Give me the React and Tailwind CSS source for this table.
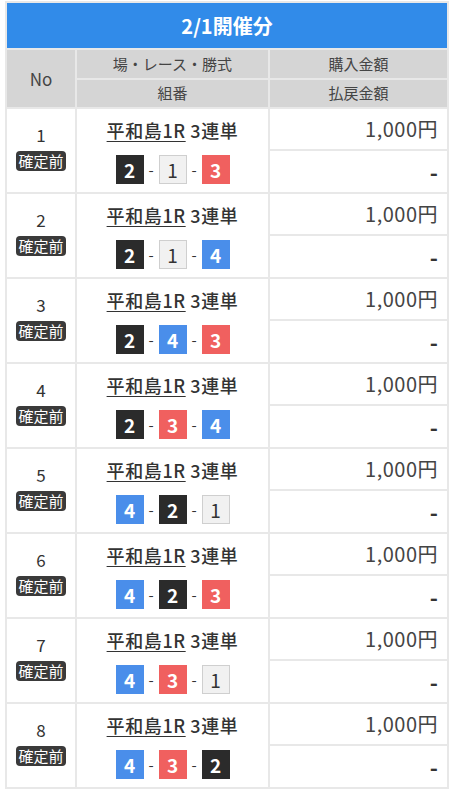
import React from 'react';

const font = { fontFamily: '"Noto Sans CJK JP", "Noto Sans", sans-serif' };

const bets = [
  { no: 1, combo: [2, 1, 3] },
  { no: 2, combo: [2, 1, 4] },
  { no: 3, combo: [2, 4, 3] },
  { no: 4, combo: [2, 3, 4] },
  { no: 5, combo: [4, 2, 1] },
  { no: 6, combo: [4, 2, 3] },
  { no: 7, combo: [4, 3, 1] },
  { no: 8, combo: [4, 3, 2] },
];

const boatClass = {
  1: 'bg-[#f1f1f1] text-[#333] border border-[#cfcfcf] font-normal',
  2: 'bg-[#2b2b2b] text-white font-bold',
  3: 'bg-[#f0605f] text-white font-bold',
  4: 'bg-[#4a8eea] text-white font-bold',
};

const Boat = ({ n }) => (
  <span className={`w-[28px] h-[29px] flex items-center justify-center text-[19px] leading-none ${boatClass[n]}`}>
    {n}
  </span>
);

const Combo = ({ combo }) => (
  <div className="flex items-center">
    {combo.map((n, i) => (
      <React.Fragment key={i}>
        {i > 0 && <span className="w-[15px] text-center text-[15px] text-[#333] leading-none">-</span>}
        <Boat n={n} />
      </React.Fragment>
    ))}
  </div>
);

const App = () => {
  return (
    <div className="bg-white min-h-screen px-[5px] pt-[1px] text-[#333]" style={font}>
      <div className="grid grid-cols-[68px_191px_1fr] gap-[2px] bg-[#e8e8e8] p-[2px]">
        <div className="col-span-3 h-[45px] bg-[#318be9] flex items-center justify-center text-white font-bold text-[20px]">
          2/1開催分
        </div>

        <div className="row-span-2 bg-[#d5d5d5] flex items-center justify-center text-[17px] text-[#444]">
          No
        </div>
        <div className="h-[28px] bg-[#d5d5d5] flex items-center justify-center text-[15px] text-[#444]">
          場・レース・勝式
        </div>
        <div className="h-[28px] bg-[#d5d5d5] flex items-center justify-center text-[15px] text-[#444]">
          購入金額
        </div>
        <div className="h-[27px] bg-[#d5d5d5] flex items-center justify-center text-[15px] text-[#444]">
          組番
        </div>
        <div className="h-[27px] bg-[#d5d5d5] flex items-center justify-center text-[15px] text-[#444]">
          払戻金額
        </div>

        {bets.map((b) => (
          <React.Fragment key={b.no}>
            <div className="row-span-2 bg-white flex flex-col items-center pt-[16px] gap-[6px]">
              <span className="text-[17px] leading-[20px] text-[#333]">{b.no}</span>
              <span className="bg-[#3a3a3a] text-white text-[15px] leading-[20px] px-[2px] rounded-[4px]">確定前</span>
            </div>
            <div className="row-span-2 bg-white flex flex-col items-center pt-[9px] gap-[13px]">
              <div className="text-[18px] leading-[24px] font-medium tracking-[0.6px] text-[#333]">
                <span className="underline underline-offset-[3px] decoration-1">平和島1R</span>&nbsp;3連単
              </div>
              <Combo combo={b.combo} />
            </div>
            <div className="h-[40px] bg-white flex items-center justify-end pr-[9px] text-[20px] tracking-[0.5px] text-[#444]">
              1,000円
            </div>
            <div className="h-[41px] bg-white flex items-center justify-end pr-[9px] text-[22px] font-bold text-[#333]">
              -
            </div>
          </React.Fragment>
        ))}
      </div>
    </div>
  );
};

export default App;
